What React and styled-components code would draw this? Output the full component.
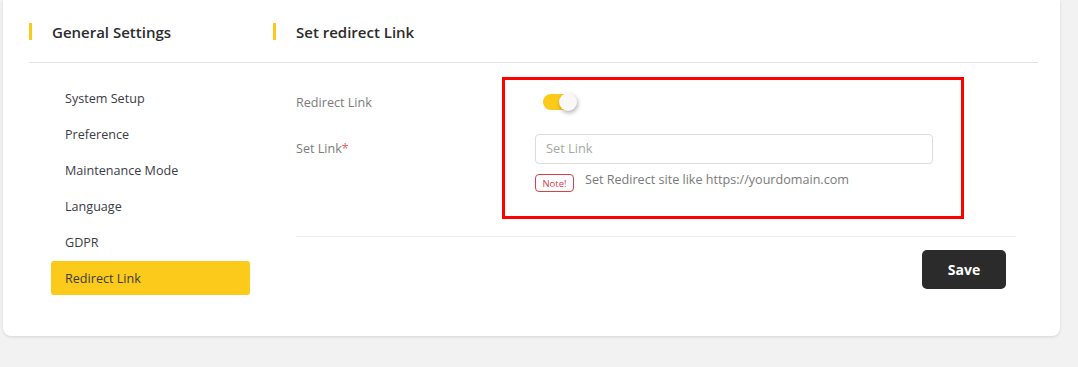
import React from "react";
import styled, { createGlobalStyle } from "styled-components";

const Global = createGlobalStyle`
  html, body { margin: 0; padding: 0; background: #f2f2f2; }
  body { font-family: "Open Sans", "Liberation Sans", sans-serif; color: #3a3a3a; }
  * { box-sizing: border-box; }
`;

const Page = styled.div`
  padding: 0 18px 0 3px;
  height: 367px;
`;

const Card = styled.div`
  position: relative;
  background: #fff;
  border-radius: 0 0 8px 8px;
  box-shadow: 0 1px 3px rgba(0, 0, 0, 0.12);
  padding: 0 22px 0 26px;
  height: 336px;
`;

const HeaderRow = styled.div`
  display: flex;
  align-items: center;
  height: 63px;
  padding-top: 1px;
  border-bottom: 1px solid #e3e3e3;
`;

const Heading = styled.h2`
  margin: 0;
  width: ${(p) => p.$w || "auto"};
  display: flex;
  align-items: center;
  gap: 20px;
  font-size: 15px;
  font-weight: 600;
  color: #2b2b2b;
  &::before {
    content: "";
    display: block;
    width: 3px;
    height: 17px;
    background: #fbca1a;
  }
`;

const Body = styled.div`
  display: flex;
`;

const Sidebar = styled.ul`
  list-style: none;
  margin: 0;
  padding: 18px 0 0 22px;
  width: 244px;
  display: flex;
  flex-direction: column;
  gap: 2px;
`;

const NavItem = styled.li`
  width: 199px;
  height: 34px;
  display: flex;
  align-items: center;
  padding-left: 14px;
  font-size: 12.6px;
  color: #3c3c46;
  border-radius: 3px;
  background: ${(p) => (p.$active ? "#fbca1a" : "transparent")};
`;

const Content = styled.div`
  flex: 1;
  padding: 15px 22px 0 23px;
`;

const Form = styled.div`
  display: flex;
  flex-direction: column;
  padding-bottom: 44px;
  border-bottom: 1px solid #ececec;
`;

const Row = styled.div`
  display: grid;
  grid-template-columns: 239px 398px;
  align-items: start;
  margin-bottom: ${(p) => p.$mb || "0"};
`;

const Label = styled.label`
  font-size: 12.6px;
  color: #7c7c7c;
  line-height: 18px;
  padding-top: ${(p) => p.$pt || "0"};
  span { color: #f25c5c; }
`;

const ToggleCell = styled.div`
  padding-top: 15px;
`;

const Toggle = styled.div`
  position: relative;
  margin-left: 8px;
  width: 32px;
  height: 16px;
  border-radius: 8px;
  background: #fbca1a;
  margin-top: 1px;
  &::after {
    content: "";
    position: absolute;
    right: -2px;
    top: -1px;
    width: 18px;
    height: 18px;
    border-radius: 50%;
    background: #f8f8f8;
    box-shadow: 1px 2px 4px rgba(0, 0, 0, 0.3);
  }
`;

const Field = styled.div`
  display: flex;
  flex-direction: column;
  gap: 10px;
`;

const Input = styled.input`
  width: 398px;
  height: 30px;
  border: 1px solid #dcdcdc;
  border-radius: 4px;
  padding: 0 10px 2px;
  font-family: inherit;
  font-size: 12.8px;
  color: #333;
  outline: none;
  &::placeholder { color: #a7a7a7; }
`;

const Hint = styled.div`
  display: flex;
  align-items: flex-start;
  gap: 11px;
`;

const HintText = styled.span`
  font-size: 12.6px;
  line-height: 18px;
  margin-top: -3px;
  color: #7a7a7a;
`;

const Note = styled.span`
  display: inline-flex;
  align-items: center;
  justify-content: center;
  width: 39px;
  height: 18px;
  border: 1px solid #d8414c;
  border-radius: 4px;
  color: #d8414c;
  font-size: 9.5px;
`;

const Footer = styled.div`
  display: flex;
  justify-content: flex-end;
  padding: 13px 10px 0 0;
`;

const SaveButton = styled.button`
  width: 84px;
  height: 39px;
  border: none;
  border-radius: 5px;
  background: #2b2b2b;
  color: #fff;
  font-family: inherit;
  font-size: 14px;
  font-weight: 700;
  padding-bottom: 2px;
`;

const Highlight = styled.div`
  position: absolute;
  left: 499px;
  top: 77px;
  width: 462px;
  height: 142px;
  border: 3px solid #ff0000;
  pointer-events: none;
`;

const items = ["System Setup", "Preference", "Maintenance Mode", "Language", "GDPR", "Redirect Link"];

export default function App() {
  return (
    <>
      <Global />
      <Page>
        <Card>
          <HeaderRow>
            <Heading $w="244px">General Settings</Heading>
            <Heading>Set redirect Link</Heading>
          </HeaderRow>
          <Body>
            <Sidebar>
              {items.map((it) => (
                <NavItem key={it} $active={it === "Redirect Link"}>{it}</NavItem>
              ))}
            </Sidebar>
            <Content>
              <Form>
                <Row $mb="22px">
                  <Label $pt="16px">Redirect Link</Label>
                  <ToggleCell>
                    <Toggle />
                  </ToggleCell>
                </Row>
                <Row>
                  <Label $pt="6px">Set Link<span>*</span></Label>
                  <Field>
                    <Input placeholder="Set Link" />
                    <Hint>
                      <Note>Note!</Note>
                      <HintText>Set Redirect site like https://yourdomain.com</HintText>
                    </Hint>
                  </Field>
                </Row>
              </Form>
              <Footer>
                <SaveButton>Save</SaveButton>
              </Footer>
            </Content>
          </Body>
          <Highlight />
        </Card>
      </Page>
    </>
  );
}
